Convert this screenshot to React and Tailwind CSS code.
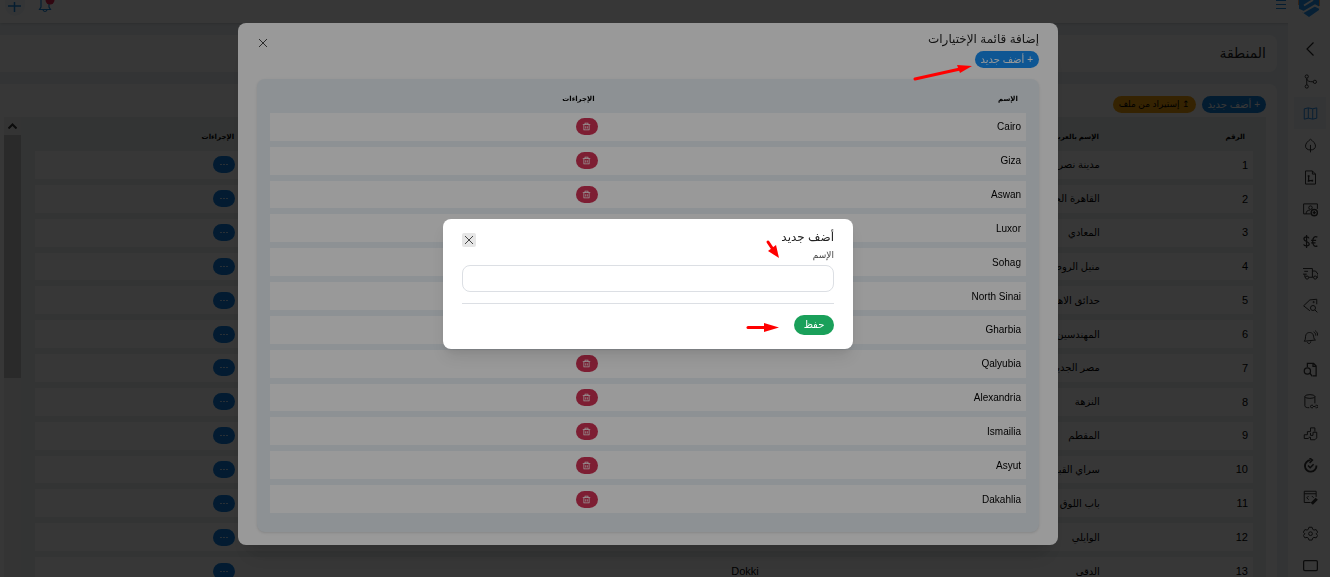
import { useState } from "react";
import { RiDeleteBinLine } from "react-icons/ri";

const cities = [
  "Cairo",
  "Giza",
  "Aswan",
  "Luxor",
  "Sohag",
  "North Sinai",
  "Gharbia",
  "Qalyubia",
  "Alexandria",
  "Ismailia",
  "Asyut",
  "Dakahlia",
];

const regions = [
  { id: 1, name: "مدينة نصر" },
  { id: 2, name: "القاهرة الجديدة" },
  { id: 3, name: "المعادي" },
  { id: 4, name: "منيل الروضة" },
  { id: 5, name: "حدائق الاهرام" },
  { id: 6, name: "المهندسين" },
  { id: 7, name: "مصر الجديدة" },
  { id: 8, name: "النزهة" },
  { id: 9, name: "المقطم" },
  { id: 10, name: "سراي القبة" },
  { id: 11, name: "باب اللوق" },
  { id: 12, name: "الوايلي" },
  { id: 13, name: "الدقي", nameEn: "Dokki" },
];

const menuItems = [
  {
    name: "branches",
    icon: (
      <>
        <circle cx="6" cy="4" r="2.6" />
        <circle cx="6" cy="20" r="2.6" />
        <circle cx="19" cy="12.5" r="2.6" />
        <path d="M6 6.6v10.8M6 8c1 3.500 4 4.500 10.400 4.500" />
      </>
    ),
  },
  {
    name: "map",
    active: true,
    icon: <path d="M2 4.500 8.500 3l7 1.500L22 3v16.500L15.500 21l-7-1.500L2 21zM8.500 3v16.500M15.500 4.500V21" />,
  },
  {
    name: "leaf",
    icon: <path d="M12 2c4 3 8 6.500 8 11a7 6 0 0 1-8 6 7 6 0 0 1-8-6c0-4.500 4-8 8-11zM12 11v12" />,
  },
  {
    name: "reports",
    icon: (
      <>
        <path d="M4 1.500h11l5 5v16H4zM15 1.500v5h5" />
        <path d="M9 9v8h7" strokeWidth="2" />
        <path d="M7.500 9.500h3M7.500 17.500h3M15 15.500v3" strokeWidth="2.500" />
      </>
    ),
  },
  {
    name: "customers",
    icon: (
      <>
        <path d="M12 19H1V3h22v8M5 19c0-4 2-6 6-6" />
        <circle cx="12" cy="9" r="2.800" />
        <circle cx="18" cy="17" r="5" strokeWidth="2.200" />
        <path d="M18 14.500v5M15.500 17h5" strokeWidth="2.200" />
      </>
    ),
  },
  {
    name: "currency",
    icon: (
      <>
        <path d="M9.500 7C8.500 3.500 1.500 4 1.500 8c0 4.500 8.500 3.500 8.500 8 0 4-8 4-9 .500M5.700 1.500v21" strokeWidth="2" />
        <path d="M23 5c-4-2-7.500.500-7.500 7s3.500 9 7.500 7M13 10h8M13 14h7" strokeWidth="2" />
      </>
    ),
  },
  {
    name: "delivery",
    icon: (
      <>
        <path d="M0 4h15v14H9M2 8.500h6M0 13h6M3 13v5h1M15 8h5l4 5v5h-2M15 18h2" />
        <circle cx="6.500" cy="18.500" r="2.500" />
        <circle cx="19.500" cy="18.500" r="2.500" />
      </>
    ),
  },
  {
    name: "offers",
    icon: (
      <>
        <path d="M11 20.500 1 12.500 11 3l11-1v8" />
        <circle cx="17" cy="6.500" r="1" />
        <circle cx="16" cy="16" r="4" />
        <path d="m19 19 4 4" />
      </>
    ),
  },
  {
    name: "alerts",
    icon: (
      <>
        <path d="M2 18c3-3 1-7 3-11s9-4 11 0 0 7 4 9zM7 19c1 4 5 3.500 5.500-.800" />
        <path d="M17 3c2 1 3.500 3 3.500 6M19.500 1C22 3 23.500 5 23.500 9" />
      </>
    ),
  },
  {
    name: "file search",
    icon: (
      <>
        <path d="M7 8V2h10l4 4.500V22h-5M16 2v5h5" strokeWidth="2" />
        <circle cx="7" cy="14.500" r="5" strokeWidth="2" />
        <path d="m11 18 4 5" strokeWidth="2" />
      </>
    ),
  },
  {
    name: "database",
    icon: (
      <>
        <ellipse cx="11" cy="4" rx="8" ry="3" />
        <path d="M3 4v15c0 2 3 3 7 3M19 4v11" />
        <path d="M16 18h-2a2 2 0 0 0 0 4h2M20 18h2a2 2 0 0 1 0 4h-2M16 20h4" />
      </>
    ),
  },
  {
    name: "modules",
    icon: (
      <>
        <path d="M9 20H2v-6h5V9h5V3h7v6" />
        <path d="M12 11v4h4v-5h6v9l-3 3h-7v-4h-3" />
      </>
    ),
  },
  {
    name: "tasks",
    icon: (
      <>
        <path d="M12 3.500A9.200 9.200 0 1 0 21.500 12" strokeWidth="3" />
        <path d="m10.500 0 4.500 3.500L10.500 8M8 12l3.500 3.500L17 10" strokeWidth="2.500" />
      </>
    ),
  },
  {
    name: "code",
    icon: (
      <>
        <path d="M12 20H2V2h19v9M2 6h19M9 9.500l-3 3 3 3M14 9.500l3 3" />
        <path d="m14 22 8-8" strokeWidth="5" />
      </>
    ),
  },
  {
    name: "settings",
    spaced: true,
    icon: (
      <>
        <path d="M9.500 2h5l1 3.300 2 1.200 3.500-.800 2.500 4.300-2.500 2.500 2.500 2.500-2.500 4-3.500-.800-2 1.200-1 3.100h-5l-1-3.100-2-1.200-3.500.800L.5 15 3 12.500.5 10 3 5.700l3.500.800 2-1.200z" />
        <circle cx="12" cy="12.300" r="3" />
      </>
    ),
  },
  {
    name: "screen",
    icon: <rect x="1" y="4" width="22" height="16" rx="2" strokeWidth="2" />,
  },
];

function CloseIcon() {
  return (
    <svg viewBox="0 0 10 10" className="w-[10px] h-[10px]" stroke="#333" strokeWidth=".9" fill="none">
      <path d="m1 1 8 8M9 1 1 9" />
    </svg>
  );
}

function Header() {
  return (
    <header className="flex justify-between h-[23px] shrink-0 bg-white shadow-sm">
      <div className="flex items-start gap-3 pr-[10px]">
        <svg viewBox="0 0 22 18" className="w-[22px] h-[18px]">
          <path d="M1 0h20v10l-10 7L1 10z" fill="#2196f3" />
          <path d="M6 5.500 15 0M0 9.500l5.500 2.500L17 5.500 22 8" stroke="#fff" strokeWidth="2" fill="none" />
          <path d="M.5 0v5M21.500 0v6" stroke="#f5a66b" />
        </svg>
        <button aria-label="menu">
          <svg viewBox="0 0 10 9" className="w-[10px] h-[9px]" stroke="#1a86dc">
            <path d="M0 .5h10M0 4.500h10M0 8.500h10" />
          </svg>
        </button>
      </div>
      <div className="flex items-start gap-[10px] pl-[5px]">
        <button aria-label="notifications" className="w-5">
          <svg viewBox="0 0 20 14" className="w-5 h-[14px]" fill="none" stroke="#1a86dc" strokeWidth="1.200">
            <path d="M6 0v7l-1.500 2.500h11L14 7V0M8 10c1 2 3 2 4 0" />
            <circle cx="15" cy="0" r="4.500" fill="#e0244e" stroke="none" />
          </svg>
        </button>
        <button aria-label="add" className="w-5 h-4 rounded-b-full bg-[#eef6fb]">
          <svg viewBox="0 0 20 12" className="w-5 h-3" stroke="#1a86dc" strokeWidth="1.500">
            <path d="M3 4h13M9.500 0v10" />
          </svg>
        </button>
      </div>
    </header>
  );
}

function Sidebar() {
  return (
    <nav className="w-[42px] shrink-0 bg-white pt-[10px] pl-[2px] flex flex-col items-center" dir="ltr">
      <button aria-label="collapse" className="w-8 h-8 shrink-0 flex items-center justify-center">
        <svg viewBox="0 0 8 14" className="w-2 h-[14px]" fill="none" stroke="#222" strokeWidth="1.200">
          <path d="M7.500.5 1 7l6.500 6.500" />
        </svg>
      </button>
      {menuItems.map((item) => (
        <a
          key={item.name}
          href="#"
          aria-label={item.name}
          className={`w-8 h-8 shrink-0 flex items-center justify-center ${item.active ? "bg-[#eef4fb] text-[#2a8fe6]" : "text-[#333]"} ${item.spaced ? "mt-1" : ""}`}
        >
          <svg viewBox="0 0 24 24" className="w-[15px] h-[15px]" fill="none" stroke="currentColor" strokeWidth="1.600">
            {item.icon}
          </svg>
        </a>
      ))}
    </nav>
  );
}

function RegionsTable() {
  return (
    <table className="h-[474px] w-full table-fixed border-separate border-spacing-x-0 border-spacing-y-[6px] text-right text-black">
      <thead>
        <tr className="h-[22px] align-bottom text-[7px] leading-3 font-bold">
          <th className="w-[12%] px-2 pb-[2px]">الرقم</th>
          <th className="w-[28%] px-2 pb-[2px]">الإسم بالعربية</th>
          <th className="px-2 pb-[2px]"></th>
          <th className="w-[17%] px-2 pb-[2px]">الإجراءات</th>
        </tr>
      </thead>
      <tbody>
        {regions.map((region) => (
          <tr key={region.id} className="h-[27px] bg-white text-[10px]">
            <td className="px-[5px] text-[11px]">{region.id}</td>
            <td className="px-[7px]">{region.name}</td>
            <td className="px-[7px] text-[11px]">{region.nameEn}</td>
            <td className="px-[7px]">
              <button
                aria-label="more"
                className="flex items-center justify-center gap-px w-[22px] h-[17px] rounded-full bg-[#0e7fe0]"
              >
                <span className="w-[2px] h-px bg-white/70"></span>
                <span className="w-[2px] h-px bg-white/70"></span>
                <span className="w-[2px] h-px bg-white/70"></span>
              </button>
            </td>
          </tr>
        ))}
      </tbody>
    </table>
  );
}

function OptionsDialog() {
  return (
    <div className="w-[820px] h-fit rounded-lg bg-white px-[19px] pt-2 pb-[13px] shadow-xl">
      <div className="flex justify-between">
        <div>
          <h2 className="text-[12px] leading-4 text-[#222]">إضافة قائمة الإختيارات</h2>
          <button className="mt-1 block h-[17px] rounded-full bg-[#1890f5] px-[6px] text-[10px] leading-[17px] text-white">
            + أضف جديد
          </button>
        </div>
        <button aria-label="close" className="mt-[7px] ml-[1px] h-[10px]">
          <CloseIcon />
        </button>
      </div>

      <div className="mt-[11px] rounded-lg bg-[#ebf2f7] px-[13px] pb-[13px] shadow-sm">
        <table className="h-[440px] w-full table-fixed border-separate border-spacing-x-0 border-spacing-y-[6px] text-right text-black">
          <thead>
            <tr className="h-[22px] align-bottom text-[7px] leading-3 font-bold">
              <th className="w-[56%] px-2 pb-[2px]">الإسم</th>
              <th className="px-2 pb-[2px]">الإجراءات</th>
            </tr>
          </thead>
          <tbody>
            {cities.map((city) => (
              <tr key={city} className="h-[27px] bg-white text-[10px]">
                <td className="px-[5px]">{city}</td>
                <td className="px-[5px]">
                  <button
                    aria-label="delete"
                    className="flex items-center justify-center w-[22px] h-[17px] rounded-full bg-[#d13355] text-white"
                  >
                    <RiDeleteBinLine size={9} />
                  </button>
                </td>
              </tr>
            ))}
          </tbody>
        </table>
      </div>
    </div>
  );
}

function AddDialog() {
  const [name, setName] = useState("");

  return (
    <div className="w-[410px] rounded-lg bg-white px-[19px] pt-2 pb-[14px] shadow-lg">
      <div className="flex justify-between">
        <h2 className="text-[12px] leading-5 text-[#222]">أضف جديد</h2>
        <button aria-label="close" className="mt-[6px] flex h-[14px] w-[14px] items-center justify-center rounded-xs bg-[#e6e6e6]">
          <CloseIcon />
        </button>
      </div>
      <label htmlFor="optionName" className="block text-[9px] leading-4 text-[#444]">
        الإسم
      </label>
      <input
        id="optionName"
        type="text"
        value={name}
        onChange={(e) => setName(e.target.value)}
        className="mt-[2px] block h-[27px] w-full rounded-lg border border-[#dcdfe4] px-2 text-xs outline-none"
      />
      <hr className="mt-[11px] mb-[11px] border-[#dcdfe4]" />
      <button className="block h-5 w-10 rounded-full bg-[#1aa05a] text-[10px] leading-5 text-white">حفظ</button>
    </div>
  );
}

export default function App() {
  return (
    <div dir="rtl" className="h-screen overflow-hidden font-['Liberation_Sans','DejaVu_Sans',sans-serif]">
      <div className="flex h-full flex-col bg-[#ebf1f5]">
        <Header />
        <div className="flex min-h-0 grow">
          <Sidebar />
          <main className="flex min-w-0 grow flex-col gap-3 pt-3 pr-[11px]">
            <div className="h-[37px] shrink-0 rounded-r-lg bg-white px-[11px]">
              <h1 className="text-sm leading-[37px] text-[#222]">المنطقة</h1>
            </div>
            <div className="flex min-h-0 grow flex-col rounded-tr-lg bg-white pt-3 pr-[11px] pl-1">
              <div className="flex shrink-0 gap-[6px]">
                <button className="h-[17px] rounded-full bg-[#1080dc] px-[6px] text-[10px] leading-[17px] text-white">
                  + أضف جديد
                </button>
                <button className="h-[17px] rounded-full bg-[#f5a20c] px-[6px] text-[9px] leading-[17px] text-black">
                  ↥ إستيراد من ملف
                </button>
              </div>
              <div className="mt-1 flex min-h-0 grow bg-[#eaf1ef]">
                <div className="min-w-0 grow overflow-hidden pr-[13px] pl-[14px]">
                  <RegionsTable />
                </div>
                {/* scrollbar */}
                <div className="w-[17px] shrink-0 bg-[#f1f1f1]">
                  <div className="flex h-[18px] items-center justify-center">
                    <svg viewBox="0 0 9 6" className="w-[9px] h-[6px]" fill="none" stroke="#333" strokeWidth="2">
                      <path d="m.5 5.500 4-4 4 4" />
                    </svg>
                  </div>
                  <div className="h-[243px] bg-[#c1c1c1]"></div>
                </div>
              </div>
            </div>
          </main>
        </div>
      </div>

      <div className="fixed inset-0 flex items-start justify-center bg-black/64 pt-[23px] pr-[34px]">
        <OptionsDialog />
      </div>

      <div className="fixed inset-0 flex items-center justify-center bg-black/40 pr-[34px] pb-[9px]">
        <AddDialog />
      </div>

      {/* pointers */}
      <svg className="pointer-events-none fixed top-0 left-0 h-full w-full" fill="#f00" stroke="#f00">
        <path d="m915 79 45-10" strokeWidth="3" strokeLinecap="round" />
        <path d="m972 66-15-1 3 8z" stroke="none" />
        <path d="m768 242 4 6" strokeWidth="3" strokeLinecap="round" />
        <path d="m779 258-11-7 8-6z" stroke="none" />
        <path d="M748 327.500h18" strokeWidth="3" strokeLinecap="round" />
        <path d="m779 327.500-15-4.500v9z" stroke="none" />
      </svg>
    </div>
  );
}
